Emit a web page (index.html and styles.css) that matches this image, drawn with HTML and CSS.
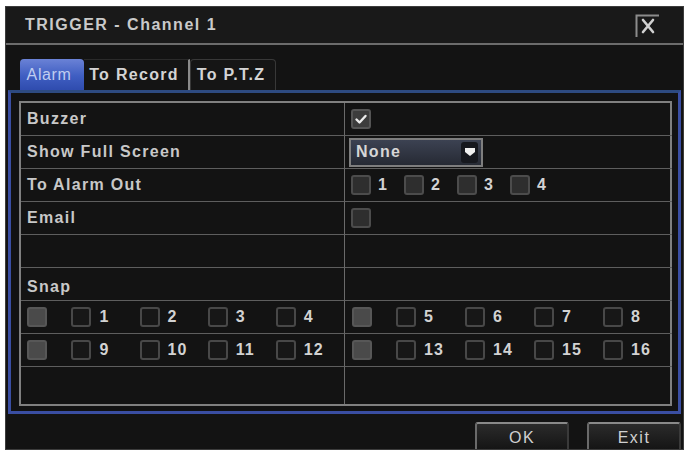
FILE: index.html
```html
<!DOCTYPE html>
<html>
<head>
<meta charset="utf-8">
<link rel="stylesheet" href="styles.css">
</head>
<body>
<div class="dialog">
  <div class="titlebar">
    <span class="title">TRIGGER - Channel 1</span>
    <span class="close">
      <svg width="26" height="24" viewBox="0 0 26 24">
        <path d="M1.5 23 V1.5 H24" fill="none" stroke="#8c8c8c" stroke-width="2"/>
        <path d="M8 6 L18 18 M18 6 L8 18" stroke="#d0d0d0" stroke-width="2.6" stroke-linecap="round"/>
      </svg>
    </span>
  </div>
  <div class="body">
    <div class="tabs">
      <span class="tab active">Alarm</span>
      <span class="tab rec">To Record</span>
      <span class="tab ptz">To P.T.Z</span>
    </div>
    <div class="panel">
      <div class="grid">
        <div class="cell label">Buzzer</div>
        <div class="cell right"><span class="cb on"><svg width="16" height="16" viewBox="0 0 16 16"><path d="M3.5 8.5 L6.5 11.5 L12.5 5" fill="none" stroke="#ececec" stroke-width="2.4" stroke-linecap="round" stroke-linejoin="round"/></svg></span></div>

        <div class="cell label">Show Full Screen</div>
        <div class="cell right">
          <div class="select">
            <span class="sel-text">None</span>
            <span class="sel-arrow"><svg width="12" height="10" viewBox="0 0 12 10"><path d="M1 1 H11 V5 L6 9 L1 5 Z" fill="#f0f0f0"/></svg></span>
          </div>
        </div>

        <div class="cell label">To Alarm Out</div>
        <div class="cell right alarm">
          <span class="item"><span class="cb"></span><span class="num">1</span></span>
          <span class="item"><span class="cb"></span><span class="num">2</span></span>
          <span class="item"><span class="cb"></span><span class="num">3</span></span>
          <span class="item"><span class="cb"></span><span class="num">4</span></span>
        </div>

        <div class="cell label">Email</div>
        <div class="cell right"><span class="cb"></span></div>

        <div class="cell label"></div>
        <div class="cell right"></div>

        <div class="cell label snap">Snap</div>
        <div class="cell right"></div>

        <div class="cell label snaprow">
          <span class="lead"><span class="cb fill"></span></span>
          <span class="sitem"><span class="cb dim"></span><span class="num">1</span></span>
          <span class="sitem"><span class="cb dim"></span><span class="num">2</span></span>
          <span class="sitem"><span class="cb dim"></span><span class="num">3</span></span>
          <span class="sitem"><span class="cb dim"></span><span class="num">4</span></span>
        </div>
        <div class="cell right snaprow">
          <span class="lead"><span class="cb fill"></span></span>
          <span class="sitem"><span class="cb dim"></span><span class="num">5</span></span>
          <span class="sitem"><span class="cb dim"></span><span class="num">6</span></span>
          <span class="sitem"><span class="cb dim"></span><span class="num">7</span></span>
          <span class="sitem"><span class="cb dim"></span><span class="num">8</span></span>
        </div>

        <div class="cell label snaprow">
          <span class="lead"><span class="cb fill"></span></span>
          <span class="sitem"><span class="cb dim"></span><span class="num">9</span></span>
          <span class="sitem"><span class="cb dim"></span><span class="num">10</span></span>
          <span class="sitem"><span class="cb dim"></span><span class="num">11</span></span>
          <span class="sitem"><span class="cb dim"></span><span class="num">12</span></span>
        </div>
        <div class="cell right snaprow">
          <span class="lead"><span class="cb fill"></span></span>
          <span class="sitem"><span class="cb dim"></span><span class="num">13</span></span>
          <span class="sitem"><span class="cb dim"></span><span class="num">14</span></span>
          <span class="sitem"><span class="cb dim"></span><span class="num">15</span></span>
          <span class="sitem"><span class="cb dim"></span><span class="num">16</span></span>
        </div>

        <div class="cell label last"></div>
        <div class="cell right last"></div>
      </div>
    </div>
  </div>
  <div class="footer">
    <span class="btn">OK</span>
    <span class="btn">Exit</span>
  </div>
</div>
</body>
</html>
```

FILE: styles.css
```css
html, body {
  margin: 0;
  padding: 0;
  background: #ffffff;
}

body {
  font-family: "Liberation Sans", Arial, sans-serif;
  font-size: 16px;
  font-weight: bold;
  letter-spacing: 1.3px;
  color: #cfcfcf;
}

.dialog {
  box-sizing: border-box;
  width: 679px;
  height: 444px;
  margin: 6px 0 0 5px;
  background: #131313;
  border: 1px solid #3c3c3c;
  display: flex;
  flex-direction: column;
}

.titlebar {
  height: 36px;
  flex: none;
  background: #191919;
  border-bottom: 2px solid #6c6c6c;
  display: flex;
  align-items: center;
  justify-content: space-between;
  padding: 0 22px 0 19px;
}

.title {
  letter-spacing: 1.5px;
  color: #cacaca;
}

.close {
  display: flex;
  margin-top: 2px;
}

.body {
  padding: 0 2px;
  flex: none;
}

.tabs {
  display: flex;
  margin: 14px 0 0 12px;
  height: 31px;
}

.tab {
  box-sizing: border-box;
  height: 31px;
  display: flex;
  align-items: center;
  justify-content: center;
  border-radius: 4px 4px 0 0;
  color: #d4d4d4;
}

.tab.active {
  width: 64px;
  background: linear-gradient(#6a82d6, #3f5ec2 55%, #2f4cae);
  color: #c0cdf0;
  font-weight: normal;
  letter-spacing: 0.6px;
  padding-right: 6px;
}

.tab.rec {
  width: 106px;
  background: #141414;
  border-right: 2px solid #8a8a8a;
  border-top: 1px solid #2a2a2a;
  border-radius: 0;
  padding-right: 4px;
}

.tab.ptz {
  width: 86px;
  background: #151515;
  border: 1px solid #383838;
  border-bottom: none;
  padding-right: 4px;
}

.panel {
  box-sizing: border-box;
  height: 324px;
  border: 3px solid #3a4ea2;
  border-top-color: #2d4a80;
  padding: 8px 6px 5px 8px;
  background: #121212;
}

.grid {
  box-sizing: border-box;
  height: 100%;
  border: 2px solid #808080;
  display: grid;
  grid-template-columns: 324px 1fr;
  grid-template-rows: repeat(8, 33px) 1fr;
  background: #131313;
}

.cell {
  box-sizing: border-box;
  border-bottom: 1px solid #5e5e5e;
  display: flex;
  align-items: center;
}

.cell.last {
  border-bottom: none;
}

.label {
  border-right: 1px solid #6a6a6a;
  padding-left: 6px;
  color: #c8c8c8;
}

.label.snap {
  padding-top: 6px;
}

.right {
  padding-left: 6px;
}

.cb {
  box-sizing: border-box;
  width: 20px;
  height: 20px;
  border: 2px solid #4c4c4c;
  border-radius: 3px;
  background: #2e2e2e;
  display: inline-flex;
  align-items: center;
  justify-content: center;
  flex: none;
}

.cb.on {
  background: #3c3c3c;
  border-color: #555555;
}

.cb.fill {
  background: #4a4a4a;
  border-color: #575757;
}

.cb.dim {
  background: #171717;
  border-color: #484848;
}

.num {
  margin-left: 7px;
  color: #d2d2d2;
  letter-spacing: 1px;
}

.alarm .item {
  width: 53px;
  display: flex;
  align-items: center;
}

.snaprow {
  padding-left: 6px;
}

.snaprow .lead {
  width: 45px;
  display: flex;
}

.right.snaprow .lead {
  width: 44px;
  padding-left: 1px;
}

.snaprow .sitem {
  width: 69px;
  display: flex;
  align-items: center;
}

.snaprow .num {
  margin-left: 8px;
}

.select {
  box-sizing: border-box;
  width: 134px;
  height: 29px;
  margin-left: -2px;
  border: 2px solid #7e7e7e;
  background: linear-gradient(#3c4252, #262a34);
  display: flex;
  align-items: center;
  justify-content: space-between;
  padding: 0 3px 0 5px;
}

.sel-text {
  color: #d6d6d6;
}

.sel-arrow {
  width: 17px;
  height: 21px;
  border-radius: 3px;
  background: #16181e;
  display: flex;
  align-items: center;
  justify-content: center;
}

.footer {
  flex: 1;
  display: flex;
  justify-content: flex-end;
  align-items: flex-end;
  gap: 18px;
  padding-right: 2px;
}

.btn {
  box-sizing: border-box;
  height: 27px;
  width: 94px;
  display: flex;
  align-items: center;
  justify-content: center;
  border: 2px solid #3a3a3a;
  border-top-color: #8a8a8a;
  border-left-color: #6a6a6a;
  border-bottom: none;
  border-radius: 3px 3px 0 0;
  background: linear-gradient(#2b2b2b, #151515);
  color: #d0d0d0;
  font-weight: normal;
  letter-spacing: 1.5px;
  padding-top: 2px;
}
```
